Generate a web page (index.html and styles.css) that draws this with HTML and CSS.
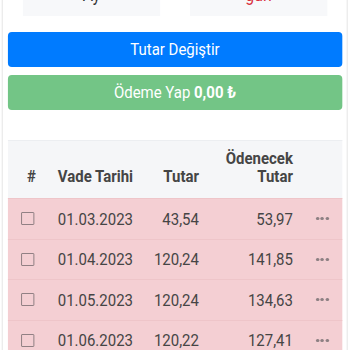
FILE: index.html
```html
<!DOCTYPE html>
<html lang="tr">
<head>
<meta charset="utf-8">
<link rel="stylesheet" href="styles.css">
</head>
<body>
<div class="viewport">
<div class="page">
<div class="frame">
  <div class="stats">
    <div class="stat"><span class="stat-value">Ay</span></div>
    <div class="stat"><span class="stat-value red">gün</span></div>
  </div>
  <button class="btn btn-blue">Tutar Değiştir</button>
  <button class="btn btn-green">Ödeme Yap <b>0,00 ₺</b></button>
  <div class="table">
    <div class="row head">
      <div class="c1 hash">#</div>
      <div class="c2">Vade Tarihi</div>
      <div class="c3">Tutar</div>
      <div class="c4">Ödenecek<br>Tutar</div>
      <div class="c5"></div>
    </div>
    <div class="row body">
      <div class="c1"><span class="check"></span></div>
      <div class="c2">01.03.2023</div>
      <div class="c3">43,54</div>
      <div class="c4">53,97</div>
      <div class="c5"><span class="dots"><i></i><i></i><i></i></span></div>
    </div>
    <div class="row body">
      <div class="c1"><span class="check"></span></div>
      <div class="c2">01.04.2023</div>
      <div class="c3">120,24</div>
      <div class="c4">141,85</div>
      <div class="c5"><span class="dots"><i></i><i></i><i></i></span></div>
    </div>
    <div class="row body">
      <div class="c1"><span class="check"></span></div>
      <div class="c2">01.05.2023</div>
      <div class="c3">120,24</div>
      <div class="c4">134,63</div>
      <div class="c5"><span class="dots"><i></i><i></i><i></i></span></div>
    </div>
    <div class="row body">
      <div class="c1"><span class="check"></span></div>
      <div class="c2">01.06.2023</div>
      <div class="c3">120,22</div>
      <div class="c4">127,41</div>
      <div class="c5"><span class="dots"><i></i><i></i><i></i></span></div>
    </div>
  </div>
</div>
</div>
</div>
</body>
</html>
```
FILE: styles.css
```css
html, body {
  margin: 0;
  padding: 0;
  background: #fff;
  font-family: Roboto, "DejaVu Sans", sans-serif;
  font-size: 17px;
  color: #454545;
}
.viewport {
  width: 350px;
  height: 350px;
  overflow: hidden;
}
.page {
  width: 397.7px;
  transform: scaleX(0.88);
  transform-origin: 0 0;
}
.frame {
  margin: 0 2.3px;
  border-left: 1px solid #e2e2e2;
  border-right: 1px solid #e2e2e2;
  padding: 0 5.7px;
  min-height: 350px;
  box-sizing: border-box;
}
.stats {
  display: flex;
  gap: 34px;
  padding: 0 17px;
  margin-top: -34px;
}
.stat {
  flex: 1;
  height: 50px;
  background: #f7f8fa;
  display: flex;
  align-items: flex-end;
  justify-content: center;
  line-height: 18px;
  font-size: 18px;
}
.stat-value {
  display: block;
  padding-bottom: 12px;
  color: #333;
}
.stat-value.red { color: #d9323f; }
.btn {
  display: block;
  width: 100%;
  border: none;
  border-radius: 4.5px / 4px;
  font-family: Roboto, "DejaVu Sans", sans-serif;
  font-size: 17px;
  line-height: 23px;
  padding: 6px 12px;
  color: #fff;
  text-align: center;
}
.btn-blue {
  background: #007bff;
  margin-top: 16px;
}
.btn-green {
  background: #73c586;
  margin-top: 8px;
}
.btn-green b { font-weight: 700; }
.table {
  margin-top: 30px;
}
.row {
  display: grid;
  grid-template-columns: 55.7px 100px 61.4px 106.8px 55.7px;
}
.head {
  background: #f5f6f8;
  border-top: 1px solid #eceef1;
  height: 58px;
  align-items: end;
  font-weight: 700;
  line-height: 18px;
  padding-bottom: 13px;
  box-sizing: border-box;
  color: #454545;
}
.body {
  background: #f4cfd3;
  height: 40.5px;
  align-items: center;
  border-top: 1px solid #eec5c9;
  box-sizing: border-box;
}
.hash { padding-left: 21.6px; }
.c2 { padding-left: 1px; }
.c3, .c4 { text-align: right; }
.c1 { display: flex; }
.body .c1 { padding-left: 14.8px; }
.check {
  width: 14.8px;
  height: 13px;
  border: 1px solid #8a7b7e;
  border-radius: 1px;
  box-sizing: border-box;
}
.c5 { display: flex; }
.dots {
  display: flex;
  gap: 1.6px;
  margin-left: 26px;
}
.dots i {
  display: block;
  width: 4px;
  height: 3.4px;
  border-radius: 50%;
  background: #8d8083;
}
```
